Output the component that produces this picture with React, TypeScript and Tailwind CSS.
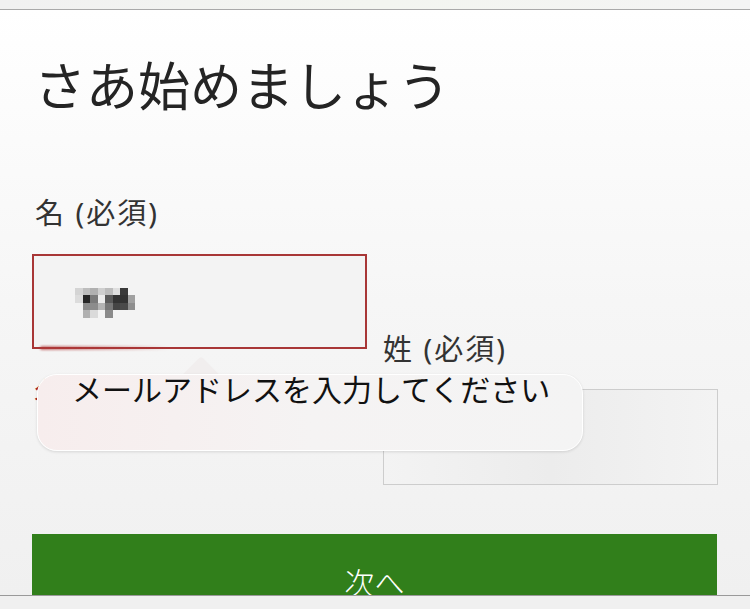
import React from 'react';

const mosaic: string[][] = [
  ['#d4d4d4', '#bdbdbd', '#b0b0b0', '#cfcfcf', '#bcbcbc', '#dedede', '#3a3a3a', ''],
  ['#dcdcdc', '#262626', '#7a7a7a', '#ececec', '#5a5a5a', '#333333', '#333333', '#a0a0a0'],
  ['', '#8a8a8a', '#8c8c8c', '#b4b4b4', '#777777', '#454545', '#4a4a4a', '#8e8e8e'],
  ['', '#b0b0b0', '#dadada', '', '#8a8a8a', '', '', ''],
];

const BlurredName = () => (
  <div className="flex flex-col">
    {mosaic.map((row, r) => (
      <div key={r} className="flex">
        {row.map((c, i) => (
          <div key={i} className="w-[7.5px] h-[7.5px]" style={{ backgroundColor: c || 'transparent' }} />
        ))}
      </div>
    ))}
  </div>
);

export default function App() {
  return (
    <div className="h-[609px] w-[750px] overflow-hidden flex flex-col bg-white font-['Noto_Sans','Noto_Sans_CJK_JP',sans-serif]">
      {/* top strip */}
      <div className="h-[10px] shrink-0 bg-gradient-to-r from-[#f1f1f1] via-[#f3f5f0] to-[#f4f4f4] border-b border-[#a9a9a9]" />

      {/* page */}
      <div className="flex-1 min-h-0 overflow-hidden bg-gradient-to-b from-white via-[#f6f6f6] to-[#f0f0f0] px-8">
        <h1 className="mt-[43px] ml-[2px] text-[52px] leading-[62px] text-[#242424] font-['Noto_Sans_CJK_JP',sans-serif]">
          さあ始めましょう
        </h1>

        <div className="mt-[80px] flex gap-4">
          {/* first name */}
          <div className="relative w-[335px] shrink-0">
            <label className="block ml-[3px] text-[29px] leading-[36px] tracking-[2px] text-[#333]">名 (必須)</label>
            <div className="relative mt-[23px] h-[95px] border-2 border-[#a83636] bg-[#f3f3f3] flex items-center pl-[41px] pt-[2px]">
              <BlurredName />
              <div className="absolute left-[6px] -bottom-[3px] h-[4px] w-[130px] rounded-full bg-gradient-to-r from-[#b03a3a]/70 via-[#b03a3a]/40 to-transparent blur-[1px]" />
            </div>
            <p className="mt-[24px] ml-[2px] text-[29px] leading-[40px] text-[#a4262c]">
              名を入力してください
              <br />・
            </p>

            {/* validation bubble */}
            <div className="absolute left-[5px] top-[179px] z-10">
              <div className="absolute left-[150px] -top-[12px] w-[28px] h-[28px] rotate-45 bg-[#f1eeee] rounded-[3px]" />
              <div className="relative w-[546px] h-[77px] rounded-[20px] bg-gradient-to-r from-[#f7eded] via-[#f5f3f3] to-[#f4f4f4] border border-white shadow-[0_1px_3px_rgba(0,0,0,0.12)] pl-[34px]">
                <span className="block -mt-[1px] text-[30px] leading-[28px] text-[#111] font-['Noto_Sans_CJK_JP',sans-serif] whitespace-nowrap">
                  メールアドレスを入力してください
                </span>
              </div>
            </div>
          </div>

          {/* last name */}
          <div className="mt-[136px] w-[335px] shrink-0">
            <label className="block text-[29px] leading-[36px] tracking-[2px] text-[#333]">姓 (必須)</label>
            <div className="mt-[22px] h-[96px] border-[1.5px] border-[#cdcdcd] bg-gradient-to-r from-[#f3f3f3] via-[#ececec] to-[#f3f3f3]" />
          </div>
        </div>

        <button className="mt-[49px] w-[685px] h-[94px] bg-[#317f1b] text-white text-[30px] leading-none flex items-center justify-center font-['Noto_Sans_CJK_JP',sans-serif] font-light">
          次へ
        </button>
      </div>

      {/* bottom toolbar */}
      <div className="h-[14px] shrink-0 bg-[#f0f0f0] border-t border-[#9a9a9a]" />
    </div>
  );
}
